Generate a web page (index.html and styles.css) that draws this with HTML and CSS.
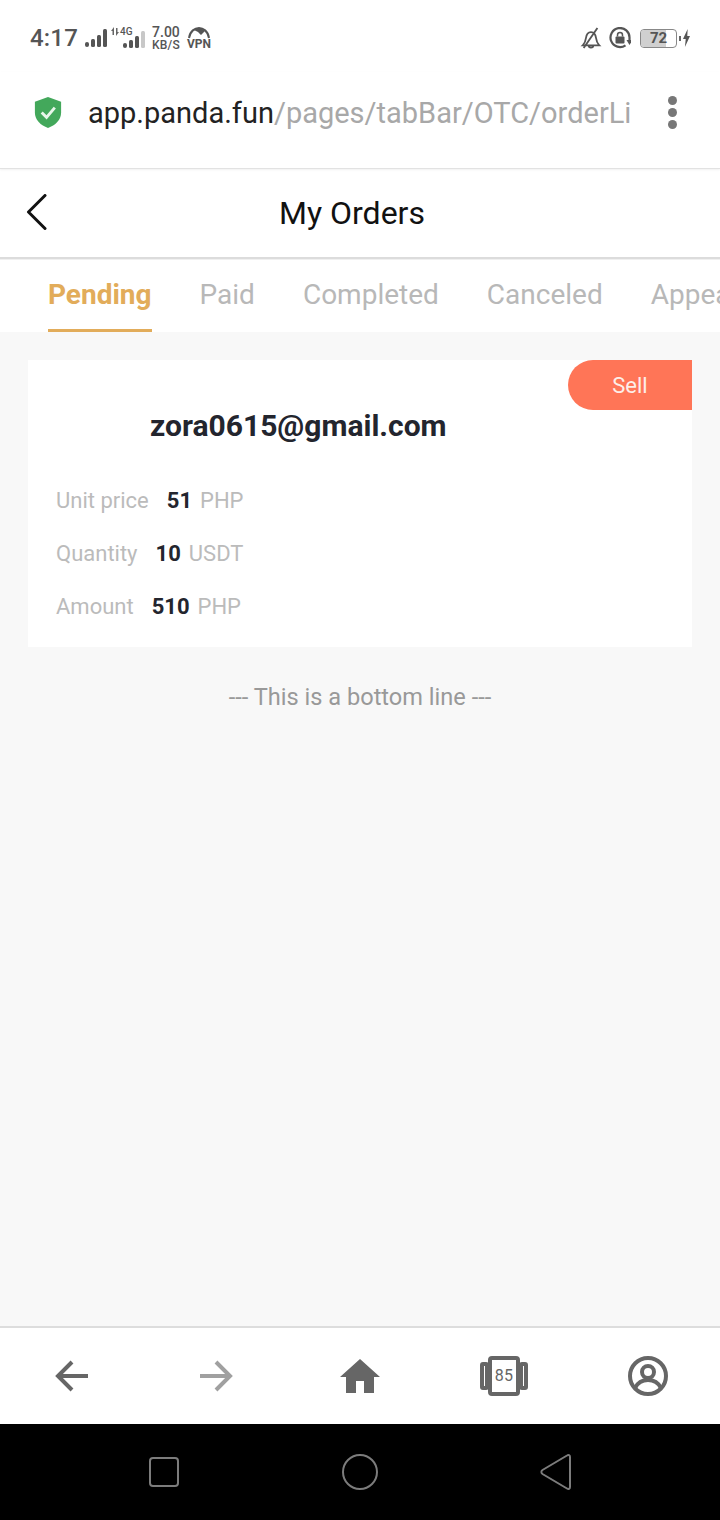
FILE: index.html
```html
<!DOCTYPE html>
<html lang="en">
<head>
<meta charset="utf-8">
<title>My Orders</title>
<link rel="stylesheet" href="styles.css">
</head>
<body>
<div class="phone">
  <div class="status">
    <div class="status-left">
      <span class="time">4:17</span>
      <svg class="sig1" width="24" height="18" viewBox="0 0 24 18"><g fill="#555"><rect x="1" y="13" width="4" height="5" rx="2"/><rect x="7" y="10" width="4" height="8" rx="1.500"/><rect x="13" y="6" width="4" height="12" rx="1.500"/><rect x="19" y="0" width="4" height="18" rx="1.500"/></g></svg>
      <div class="sig2">
        <svg class="arrows" width="8" height="9" viewBox="0 0 8 9"><path d="M3 0 0 4h1.500v4H3zM5 9l3-4H6.500V1H5z" fill="#666"/></svg>
        <span class="net">4G</span>
        <svg class="bars" width="24" height="18" viewBox="0 0 24 18"><g fill="#555"><rect x="1" y="13" width="4" height="5" rx="2"/><rect x="7" y="10" width="4" height="8" rx="1.500"/><rect x="13" y="6" width="4" height="12" rx="1.500"/></g><rect x="19" y="1" width="4" height="17" rx="1.500" fill="#c8c8c8"/></svg>
      </div>
      <div class="speed"><span>7.00</span><span>KB/S</span></div>
      <div class="vpn">
        <svg width="24" height="12" viewBox="0 0 24 12"><path d="M2 11C3 4 8 1 12 1s9 3 10 10" fill="none" stroke="#555" stroke-width="2"/><path d="M7 3c3-2 8-2 11 1l-4 4-3-3z" fill="#555"/></svg>
        <span>VPN</span>
      </div>
    </div>
    <div class="status-right">
      <svg width="22" height="24" viewBox="0 0 24 24" class="bell"><path d="M3 20c2-2 3-4 3.500-8 .5-4 2.500-6.500 5.500-6.500s5 2.500 5.500 6.500c.5 4 1.500 6 3.500 8zM9.500 20a2.500 2.500 0 0 0 5 0M4 23 19 1" fill="none" stroke="#555" stroke-width="2"/></svg>
      <svg width="22" height="22" viewBox="0 0 22 22" class="lock"><path d="M16.500 18.300A9.500 9.500 0 1 1 20.500 11v2" fill="none" stroke="#555" stroke-width="2.200"/><path d="M17.500 13h6l-3 5z" fill="#555"/><rect x="6.500" y="9.500" width="9" height="7" rx="1" fill="#555"/><path d="M8.500 9.500V8a2.500 2.500 0 0 1 5 0v1.500" fill="none" stroke="#555" stroke-width="1.500"/></svg>
      <div class="battery"><span class="charge"></span><span class="level">72</span></div>
      <span class="nub"></span>
      <svg width="7" height="18" viewBox="0 0 9 18" preserveAspectRatio="none" class="bolt"><path d="M6 0 0 10h3.500L2.500 18 9 7H5.500z" fill="#555"/></svg>
    </div>
  </div>

  <div class="urlbar">
    <svg class="shield" width="30" height="33" viewBox="0 0 30 34"><path d="M15 1 28.500 6v11c0 8-6 13-13.500 16C7.500 30 1.500 25 1.500 17V6z" fill="#43a85b"/><path d="M8.500 17l5 5 8.500-10" fill="none" stroke="#e8f6ea" stroke-width="3"/></svg>
    <div class="url"><span class="host">app.panda.fun</span><span class="path">/pages/tabBar/OTC/orderList</span></div>
    <div class="kebab"><span></span><span></span><span></span></div>
  </div>

  <header class="title-bar">
    <svg class="back" width="24" height="36" viewBox="0 0 24 36"><path d="M20 1.500 3.500 18 20 34.500" fill="none" stroke="#111" stroke-width="3" stroke-linecap="round" stroke-linejoin="round"/></svg>
    <h1>My Orders</h1>
  </header>

  <nav class="tabs">
    <a class="tab active">Pending</a>
    <a class="tab">Paid</a>
    <a class="tab">Completed</a>
    <a class="tab">Canceled</a>
    <a class="tab">Appeal</a>
  </nav>

  <main class="content">
    <section class="card">
      <span class="badge">Sell</span>
      <div class="email">zora0615@gmail.com</div>
      <div class="row"><span class="label">Unit price</span><b>51</b><span class="unit">PHP</span></div>
      <div class="row"><span class="label">Quantity</span><b>10</b><span class="unit tight">USDT</span></div>
      <div class="row"><span class="label">Amount</span><b>510</b><span class="unit">PHP</span></div>
    </section>
    <p class="bottom-line">--- This is a bottom line ---</p>
  </main>

  <footer class="browser-nav">
    <svg width="36" height="34" viewBox="0 0 36 34"><path d="M34 17H4M18 3 4 17l14 14" fill="none" stroke="#666" stroke-width="4"/></svg>
    <svg width="36" height="34" viewBox="0 0 36 34"><path d="M2 17h30M18 3l14 14-14 14" fill="none" stroke="#a0a0a0" stroke-width="4"/></svg>
    <svg width="40" height="34" viewBox="0 0 40 34"><path d="M20 0 40 18H0zM6 16h28v18H24V22h-8v12H6z" fill="#666"/></svg>
    <div class="tabs-count">
      <span class="side"></span><span class="count">85</span><span class="side"></span>
    </div>
    <svg width="40" height="40" viewBox="0 0 40 40"><circle cx="20" cy="20" r="18" fill="none" stroke="#666" stroke-width="4"/><circle cx="20" cy="16" r="6" fill="none" stroke="#666" stroke-width="4"/><path d="M7 32c3-6 8-8 13-8s10 2 13 8" fill="none" stroke="#666" stroke-width="4"/></svg>
  </footer>

  <div class="system-nav">
    <svg width="30" height="30" viewBox="0 0 30 30"><rect x="1" y="1" width="28" height="28" rx="3" fill="none" stroke="#7c7c7c" stroke-width="2"/></svg>
    <svg width="36" height="36" viewBox="0 0 36 36"><circle cx="18" cy="18" r="17" fill="none" stroke="#7c7c7c" stroke-width="2"/></svg>
    <svg width="32" height="36" viewBox="0 0 32 36"><path d="M2.500 16 27 1.500c1.500-1 3-.3 3 1.500v30c0 1.800-1.500 2.500-3 1.500L2.500 20c-1.500-1-1.500-3 0-4z" fill="none" stroke="#7c7c7c" stroke-width="2"/></svg>
  </div>
</div>
</body>
</html>
```
FILE: styles.css
```css
* { box-sizing: border-box; }
html, body { margin: 0; padding: 0; }
body { font-family: Roboto, "Liberation Sans", sans-serif; background: #fff; }
.phone { width: 720px; height: 1520px; display: flex; flex-direction: column; overflow: hidden; background: #f8f8f8; }

.status { height: 72px; flex: none; background: #fff; display: flex; justify-content: space-between; align-items: center; padding: 4px 30px 0 30px; color: #555; }
.status-left, .status-right { display: flex; align-items: center; }
.time { font-size: 24px; font-weight: 500; letter-spacing: .2px; margin-right: 6px; }
.sig2 { position: relative; width: 36px; height: 24px; margin-left: 3px; }
.sig2 .bars { position: absolute; left: 11px; top: 4px; }
.sig2 .net { position: absolute; left: 9px; top: 0; font-size: 10px; line-height: 12px; font-weight: 500; }
.sig2 .arrows { position: absolute; left: 0; top: 1px; }
.speed { display: flex; flex-direction: column; font-size: 12px; line-height: 12px; font-weight: 500; margin-left: 5px; align-items: flex-start; letter-spacing: .2px; }
.speed span:first-child { font-size: 14px; line-height: 13px; letter-spacing: 0; }
.vpn { display: flex; flex-direction: column; align-items: center; margin-left: 7px; font-size: 12px; line-height: 12px; font-weight: 700; width: 24px; }
.vpn svg { display: block; margin-bottom: -1px; }
.bell { margin-right: 7px; }
.lock { margin-right: 9px; }
.battery { position: relative; width: 37px; height: 19px; border: 1.500px solid #888; border-radius: 4px; display: flex; align-items: center; justify-content: center; overflow: hidden; }
.charge { position: absolute; left: 0; top: 0; bottom: 0; width: 72%; background: #d0d0d0; }
.level { position: relative; font-size: 15px; font-weight: 700; color: #555; }
.nub { width: 2px; height: 5px; background: #666; margin: 0 2px; }
.bolt { display: block; }

.urlbar { height: 97px; flex: none; background: #fff; border-bottom: 1px solid #e2e2e2; box-shadow: 0 1px 2px rgba(0,0,0,.06); display: flex; align-items: flex-start; padding: 24px 43px 0 33px; position: relative; z-index: 1; }
.shield { flex: none; }
.url { width: 543px; margin-left: 25px; overflow: hidden; white-space: nowrap; font-size: 29px; line-height: 34px; }
.host { color: #222; }
.path { color: #a8a8a8; }
.kebab { margin-left: auto; display: flex; flex-direction: column; gap: 3px; }
.kebab span { width: 9px; height: 9px; border-radius: 50%; background: #777; }

.title-bar { height: 90px; flex: none; background: #fff; border-bottom: 2px solid #dcdcdc; display: flex; align-items: center; justify-content: center; position: relative; padding-right: 16px; }
.title-bar h1 { margin: 0; font-size: 32px; line-height: 38px; font-weight: 400; color: #111; }
.back { position: absolute; left: 25px; top: 25px; }

.tabs { height: 73px; flex: none; background: #fff; display: flex; gap: 48px; padding-left: 48px; overflow: hidden; white-space: nowrap; border-top: 1px solid #f0f0f0; }
.tab { flex: none; font-size: 28px; line-height: 70px; color: #b8b8b8; height: 73px; }
.tab.active { font-weight: 700; color: #e2ac5a; border-bottom: 4px solid #e2ac5a; }

.content { flex: 1; padding: 28px 28px 0; }
.card { position: relative; background: #fff; height: 287px; padding: 48px 0 0 28px; }
.badge { position: absolute; right: 0; top: 0; width: 124px; height: 50px; background: #ff7557; color: #fdeee9; border-radius: 25px 0 0 25px; font-size: 22px; line-height: 52px; text-align: center; }
.email { margin-left: 94px; font-size: 30px; line-height: 36px; font-weight: 700; color: #23252e; margin-bottom: 30px; }
.row { display: flex; align-items: center; height: 53px; font-size: 22px; }
.label { color: #bbb; margin-right: 18px; }
.row b { color: #23252e; font-weight: 700; margin-right: 8px; }
.unit { color: #bbb; }
.unit.tight { margin-left: 0; }
.bottom-line { margin: 35px 0 0; text-align: center; font-size: 23.600px; line-height: 30px; color: #999; }

.browser-nav { height: 98px; flex: none; background: #fff; border-top: 2px solid #ddd; display: grid; grid-template-columns: repeat(5, 144px); justify-items: center; align-items: center; }
.tabs-count { display: flex; align-items: center; }
.count { width: 32px; height: 40px; border: 4px solid #666; border-radius: 4px; font-size: 16px; line-height: 32px; text-align: center; color: #666; letter-spacing: .3px; }
.side { width: 9px; height: 28px; border: 4px solid #666; border-radius: 3px; margin: 0 -1px; }
.system-nav { height: 96px; flex: none; background: #000; display: grid; grid-template-columns: repeat(3, 196px); justify-content: center; justify-items: center; align-items: center; }
```
